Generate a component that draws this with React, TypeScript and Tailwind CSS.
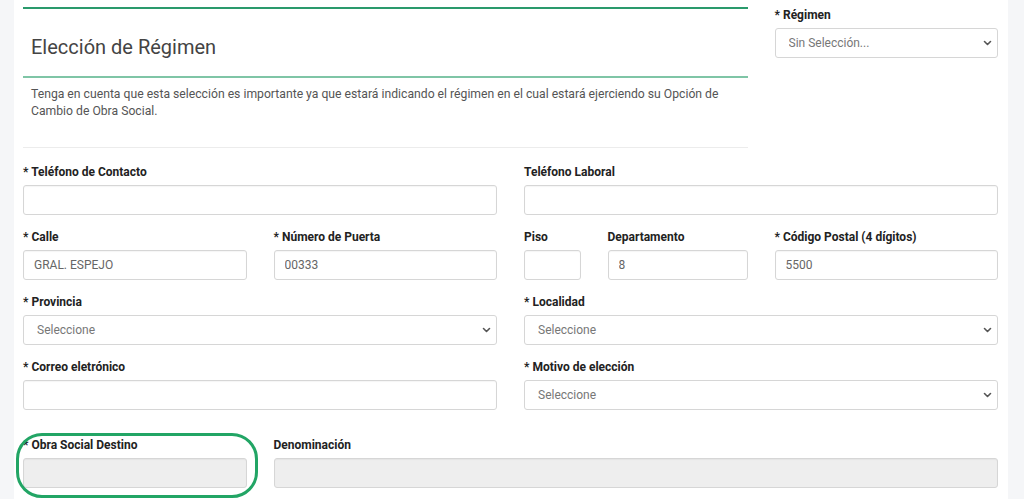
import React from 'react'

const font = { fontFamily: 'Roboto, "Noto Sans", sans-serif' }

function Label({ text, required }: { text: string; required?: boolean }) {
  return (
    <label className="block h-[16px] mb-[5px] text-[12px] leading-[16px] font-bold text-[#222]">
      {required ? '* ' : ''}
      {text}
    </label>
  )
}

function TextField({ label, required, value, disabled }: { label: string; required?: boolean; value?: string; disabled?: boolean }) {
  return (
    <div>
      <Label text={label} required={required} />
      <input
        readOnly
        value={value ?? ''}
        className={`block w-full h-[30px] rounded-[3px] border border-[#d6d6d6] px-[10px] text-[12px] text-[#666] outline-none shadow-[inset_0_1px_1px_rgba(0,0,0,0.04)] ${disabled ? 'bg-[#eeeeee]' : 'bg-white'}`}
      />
    </div>
  )
}

function SelectField({ label, required, placeholder }: { label: string; required?: boolean; placeholder: string }) {
  return (
    <div>
      <Label text={label} required={required} />
      <div className="relative">
        <select className="block w-full h-[30px] appearance-none rounded-[3px] border border-[#d6d6d6] bg-white pl-[13px] pr-8 text-[12px] text-[#777] outline-none">
          <option>{placeholder}</option>
        </select>
        <svg className="absolute right-[6px] top-[11px] h-[8px] w-[9px] pointer-events-none" viewBox="0 0 9 8" fill="none">
          <path d="M1.5 2.5 L4.5 5.5 L7.5 2.5" stroke="#555" strokeWidth="1.6" strokeLinecap="round" strokeLinejoin="round" />
        </svg>
      </div>
    </div>
  )
}

export default function App() {
  return (
    <div className="min-h-screen bg-[#f5f6f8] flex" style={font}>
      <div className="ml-[14px] w-[994px] bg-white pl-[9px] pr-[10px] pb-4">
        <div className="grid grid-cols-12 gap-x-[27px]">
          <div className="col-span-9">
            <div className="mt-[7px] border-t-[2.5px] border-[#2a9a6c]" />
            <div className="h-[67px] flex items-center pt-[8px] pl-[8px] text-[20px] text-[#444]">Elección de Régimen</div>
            <div className="border-t-2 border-[#7fc5a6]" />
            <p className="mt-[8px] pl-[8px] pr-2 text-[12.2px] leading-[17px] text-[#555]">
              Tenga en cuenta que esta selección es importante ya que estará indicando el régimen en el cual estará ejerciendo su Opción de Cambio de Obra Social.
            </p>
            <div className="mt-[27px] border-t border-[#ececec]" />
          </div>
          <div className="col-span-3 pt-[7px]">
            <SelectField label="Régimen" required placeholder="Sin Selección..." />
          </div>
        </div>

        <div className="mt-[16px] grid grid-cols-12 gap-x-[27px] gap-y-[14px]">
          <div className="col-span-6">
            <TextField label="Teléfono de Contacto" required />
          </div>
          <div className="col-span-6">
            <TextField label="Teléfono Laboral" />
          </div>

          <div className="col-span-3">
            <TextField label="Calle" required value="GRAL. ESPEJO" />
          </div>
          <div className="col-span-3">
            <TextField label="Número de Puerta" required value="00333" />
          </div>
          <div className="col-span-1">
            <TextField label="Piso" />
          </div>
          <div className="col-span-2">
            <TextField label="Departamento" value="8" />
          </div>
          <div className="col-span-3">
            <TextField label="Código Postal (4 dígitos)" required value="5500" />
          </div>

          <div className="col-span-6">
            <SelectField label="Provincia" required placeholder="Seleccione" />
          </div>
          <div className="col-span-6">
            <SelectField label="Localidad" required placeholder="Seleccione" />
          </div>

          <div className="col-span-6">
            <TextField label="Correo eletrónico" required />
          </div>
          <div className="col-span-6">
            <SelectField label="Motivo de elección" required placeholder="Seleccione" />
          </div>

          <div className="col-span-3 relative mt-[13px]">
            <TextField label="Obra Social Destino" required disabled />
            <div className="absolute left-[-7px] right-[-11px] top-[-4px] bottom-[-10px] rounded-[26px] border-[3px] border-[#22a565] pointer-events-none" />
          </div>
          <div className="col-span-9 mt-[13px]">
            <TextField label="Denominación" disabled />
          </div>
        </div>
      </div>
    </div>
  )
}
